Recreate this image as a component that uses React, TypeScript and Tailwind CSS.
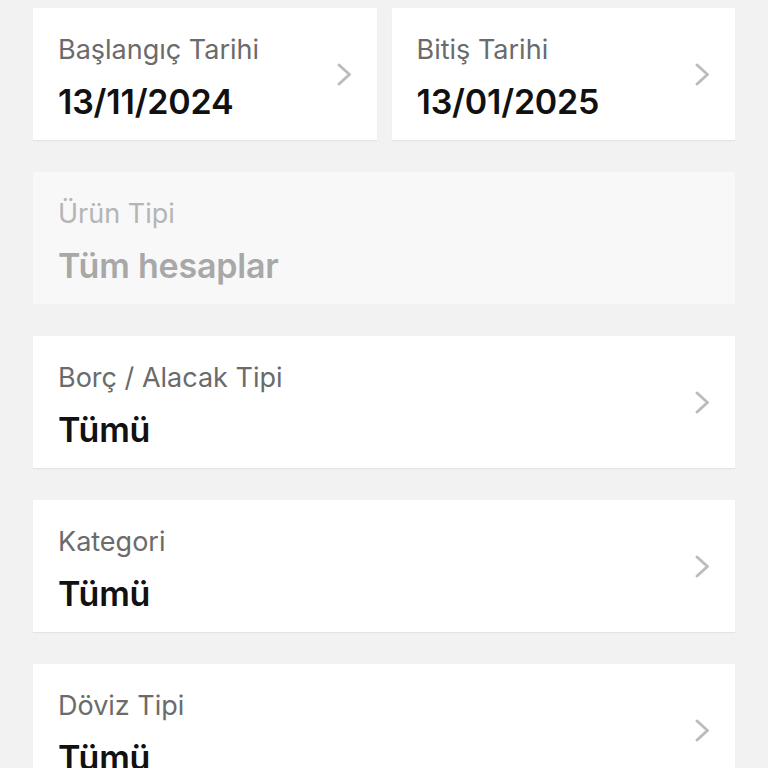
import React from "react";

const Chevron = () => (
  <svg width="17" height="25" viewBox="0 0 17 25" fill="none" className="shrink-0 self-center">
    <polyline points="3,3 13.5,12.5 3,22" stroke="#bcbcbc" strokeWidth="3" strokeLinecap="round" strokeLinejoin="round" />
  </svg>
);

function Field({
  label,
  value,
  disabled = false,
  chevron = true,
}: {
  label: string;
  value: string;
  disabled?: boolean;
  chevron?: boolean;
}) {
  return (
    <div
      className={`h-[132px] shrink-0 flex items-start pl-[25px] pr-[24px] ${
        disabled ? "bg-[#f8f8f8]" : "bg-white shadow-[0_1px_1px_rgba(0,0,0,0.06)]"
      }`}
    >
      <div className="flex-1 min-w-0 flex flex-col pt-[26px]">
        <div
          className={`text-[27px] leading-[32px] ${disabled ? "text-[#b5b5b5]" : "text-[#6b6b6b]"}`}
        >
          {label}
        </div>
        <div
          className={`mt-[16px] text-[34px] leading-[40px] font-semibold tracking-[-0.2px] ${
            disabled ? "text-[#a8a8a8]" : "text-[#111111]"
          }`}
        >
          {value}
        </div>
      </div>
      {chevron && <Chevron />}
    </div>
  );
}

export default function App() {
  return (
    <div
      className="w-[768px] h-[768px] overflow-hidden bg-[#f2f2f2] px-[33px] pt-[8px] flex flex-col gap-[32px]"
      style={{ fontFamily: "Inter, 'Liberation Sans', sans-serif" }}
    >
      <div className="grid grid-cols-2 gap-[15px] shrink-0">
        <Field label="Başlangıç Tarihi" value="13/11/2024" />
        <Field label="Bitiş Tarihi" value="13/01/2025" />
      </div>
      <Field label="Ürün Tipi" value="Tüm hesaplar" disabled chevron={false} />
      <Field label="Borç / Alacak Tipi" value="Tümü" />
      <Field label="Kategori" value="Tümü" />
      <Field label="Döviz Tipi" value="Tümü" />
    </div>
  );
}
